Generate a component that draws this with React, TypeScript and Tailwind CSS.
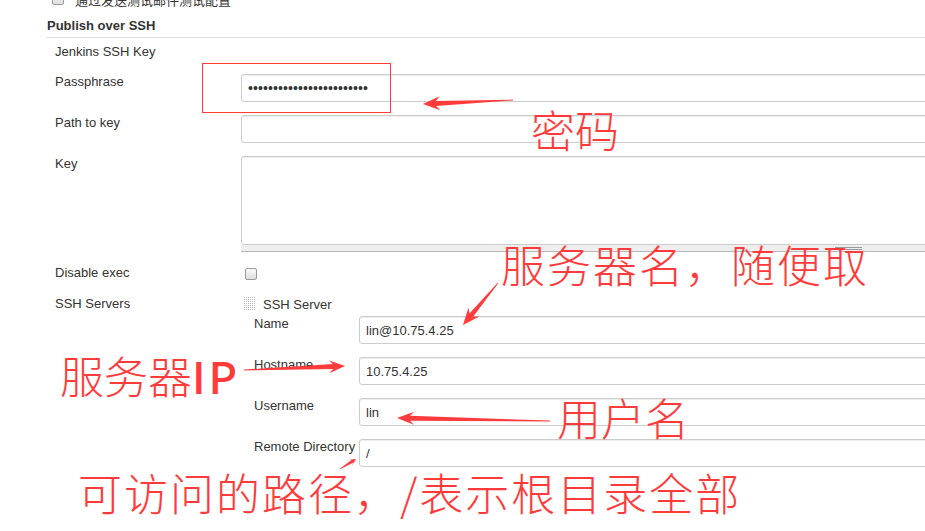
import React from 'react'

type Arrow = { x1: number; y1: number; x2: number; y2: number; head: number; half: number; shaft: number }

const arrows: Arrow[] = [
  { x1: 513, y1: 100, x2: 423, y2: 104, head: 17, half: 7, shaft: 2.5 },
  { x1: 498, y1: 283, x2: 463, y2: 325, head: 17, half: 7, shaft: 2.5 },
  { x1: 244, y1: 370, x2: 345, y2: 366, head: 16, half: 6.5, shaft: 2.5 },
  { x1: 550, y1: 421, x2: 397, y2: 418, head: 17, half: 6.5, shaft: 2.5 },
  { x1: 340, y1: 469, x2: 356, y2: 459, head: 8, half: 4, shaft: 1.5 },
]

function arrowPoints({ x1, y1, x2, y2, head, half, shaft }: Arrow) {
  const dx = x2 - x1
  const dy = y2 - y1
  const len = Math.hypot(dx, dy)
  const ux = dx / len
  const uy = dy / len
  const nx = -uy
  const ny = ux
  const at = (d: number, w: number) => `${x1 + ux * d + nx * w},${y1 + uy * d + ny * w}`
  return [
    at(0, 0.4),
    at(len - head + 4, shaft),
    at(len - head, half),
    at(len, 0),
    at(len - head, -half),
    at(len - head + 4, -shaft),
    at(0, -0.4),
  ].join(' ')
}

const inputCls =
  'h-[28px] w-full rounded-[3px] border border-[#ccc] bg-white px-[6px] text-[13px] text-[#333] shadow-[inset_0_1px_1px_rgba(0,0,0,0.075)] outline-none'

function Row({ label, children, className = '' }: { label: string; children?: React.ReactNode; className?: string }) {
  return (
    <div className={`flex ${className}`}>
      <div className="w-[186px] shrink-0">{label}</div>
      <div className="-mr-[20px] flex-1">{children}</div>
    </div>
  )
}

function SubRow({ label, value, className = '' }: { label: string; value: string; className?: string }) {
  return (
    <div className={`flex ${className}`}>
      <div className="w-[105px] shrink-0 whitespace-nowrap">{label}</div>
      <input readOnly value={value} className={`${inputCls} flex-1`} />
    </div>
  )
}

function Checkbox({ className = '' }: { className?: string }) {
  return (
    <span
      className={`block h-[12px] w-[12px] rounded-[2px] border border-[#9a9a9a] bg-gradient-to-b from-[#fafafa] to-[#dedede] ${className}`}
    />
  )
}

function Grip() {
  const dots = []
  for (let r = 0; r < 7; r++) for (let c = 0; c < 6; c++) dots.push(<rect key={`${r}-${c}`} x={c * 2} y={r * 2} width="1" height="1" />)
  return (
    <svg width="12" height="14" viewBox="0 0 12 14" className="fill-[#b5b5b5]">
      {dots}
    </svg>
  )
}

export default function App() {
  return (
    <div className="relative h-[531px] w-[925px] overflow-hidden bg-white font-['Liberation_Sans','Noto_Sans_CJK_SC',sans-serif] text-[13px] leading-4 text-[#333]">
      {/* cut-off row above */}
      <div className="h-[9px] overflow-hidden pl-[52px]">
        <div className="-mt-[7px] flex items-start gap-[11px]">
          <Checkbox />
          <span>通过发送测试邮件测试配置</span>
        </div>
      </div>

      <div className="ml-[47px] mt-[9px] border-b border-[#dcdcdc] pb-[3px] font-bold">Publish over SSH</div>

      <div className="pl-[55px]">
        <div className="mt-[6px] h-4">Jenkins SSH Key</div>

        <Row label="Passphrase" className="mt-[14px]">
          <input readOnly value={'•'.repeat(24)} className={`${inputCls} text-[14px] tracking-[0.1px]`} />
        </Row>

        <Row label="Path to key" className="mt-[13px]">
          <input readOnly value="" className={inputCls} />
        </Row>

        <Row label="Key" className="mt-[13px]">
          <textarea
            readOnly
            className="block h-[89px] w-full resize-none rounded-[3px] border border-[#ccc] bg-white shadow-[inset_0_1px_1px_rgba(0,0,0,0.075)] outline-none"
          />
          <div className="flex h-[7px] items-center justify-end border-b border-[#b8b8b8] bg-[#eee] pr-[83px]">
            <div className="h-[3px] w-[27px] border-y border-[#999]" />
          </div>
        </Row>

        <Row label="Disable exec" className="mt-[13px] h-4">
          <Checkbox className="ml-[4px] mt-[3px]" />
        </Row>

        <Row label="SSH Servers" className="mt-[15px]">
          <div className="flex h-4 items-center gap-[7px] pl-[3px]">
            <Grip />
            <span className="mt-[1px]">SSH Server</span>
          </div>
          <div className="pl-[13px]">
            <SubRow label="Name" value="lin@10.75.4.25" className="mt-[4px]" />
            <SubRow label="Hostname" value="10.75.4.25" className="mt-[13px]" />
            <SubRow label="Username" value="lin" className="mt-[13px]" />
            <SubRow label="Remote Directory" value="/" className="mt-[13px]" />
          </div>
        </Row>
      </div>

      {/* annotations */}
      <div className="absolute left-[202px] top-[63px] h-[50px] w-[189px] border border-[#ff3b3b]" />

      <svg className="pointer-events-none absolute left-0 top-0" width="925" height="531">
        {arrows.map((a, i) => (
          <polygon key={i} points={arrowPoints(a)} fill="#ff3b3b" />
        ))}
      </svg>

      <div className="pointer-events-none absolute inset-0 font-['Noto_Sans_CJK_SC',sans-serif] text-[44px] font-light leading-none text-[#ff3a3a]">
        <div className="absolute left-[531px] top-[107px]">密码</div>
        <div className="absolute left-[501px] top-[242px] tracking-[2px]">服务器名，随便取</div>
        <div className="absolute left-[60px] top-[353px]">
          服务器<span className="font-medium tracking-[3px]">IP</span>
        </div>
        <div className="absolute left-[557px] top-[395px]">用户名</div>
        <div className="absolute left-[78px] top-[470px] tracking-[2px]">可访问的路径，/表示根目录全部</div>
      </div>
    </div>
  )
}
